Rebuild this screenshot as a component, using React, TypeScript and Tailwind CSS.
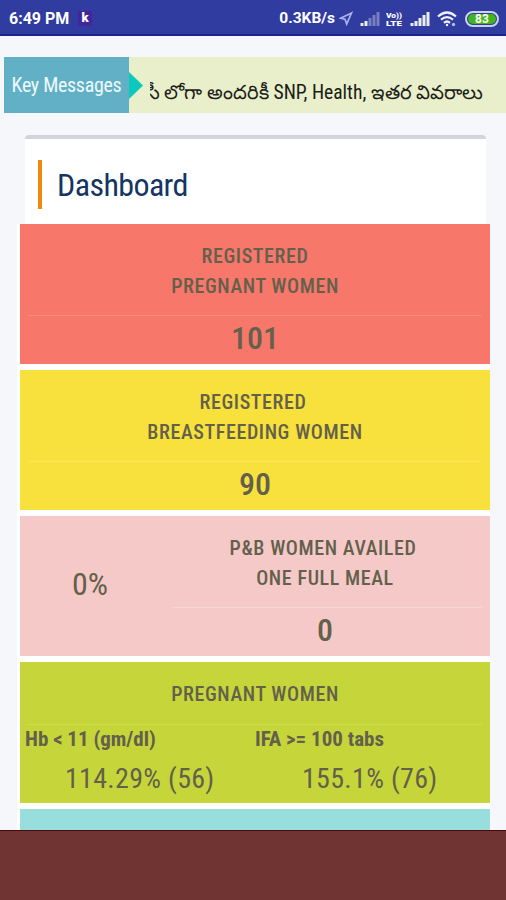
import type { ReactNode } from 'react';
import { clsx } from 'clsx';

function Signal({ level }: { level: number }) {
  return (
    <svg className="h-[15px] w-5" viewBox="0 0 20 15">
      {[3, 5, 8, 11, 14].map((h, i) => (
        <rect key={h} x={i * 4 + 0.5} y={15 - h} width="3" height={h} fill="#fff" opacity={i < level ? 0.9 : 0.35} />
      ))}
    </svg>
  );
}

function StatusBar() {
  return (
    <header className="flex h-9 items-center border-b-2 border-[#1c2292] bg-[#303c9f] pt-[3px] pl-[9px] font-[Roboto] text-white font-stretch-normal">
      <span className="w-[62px] text-base font-bold whitespace-nowrap">6:49 PM</span>
      <span className="ml-[7px] flex h-[15px] w-[14px] items-center justify-center bg-[#40279b] pb-0.5 text-[13px] font-black">k</span>
      <span className="ml-auto text-[15.5px] font-bold">0.3KB/s</span>
      <svg className="ml-1 h-[15px] w-[14px]" viewBox="0 0 15 15" fill="none" stroke="#a9b3ea" strokeWidth="1.8">
        <path d="M13.5 1.5 1.5 7.2l5 1.1 1.7 5.2z" />
      </svg>
      <div className="ml-[7px]"><Signal level={2} /></div>
      <svg className="ml-[6px] h-4 w-[17px]" viewBox="0 0 17 16" fill="#fff">
        <text x="0" y="6.5" fontSize="6.6" fontWeight="900" textLength="16" lengthAdjust="spacingAndGlyphs">Vo))</text>
        <text x="0" y="15" fontSize="7" fontWeight="900" textLength="16" lengthAdjust="spacingAndGlyphs">LTE</text>
      </svg>
      <div className="ml-[7px]"><Signal level={5} /></div>
      <svg className="ml-[7px] h-4 w-5" viewBox="0 0 20 16" fill="none" stroke="#eef1ff" strokeWidth="2.2">
        <path d="M1 5.5q9-8 18 0M4 8.7q6-5.2 12 0M7 11.8q3-2.6 6 0" />
        <circle cx="10" cy="14" r="1.2" fill="#eef1ff" stroke="none" />
        <circle cx="16.5" cy="13.5" r="1.7" fill="#aeb7ea" stroke="none" />
      </svg>
      <div className="mr-[7px] ml-[8px] flex h-4 w-[34px] rounded-full border-2 border-[#c9d3ee] p-px">
        <div className="flex flex-1 items-center justify-center rounded-full bg-[#43b51c] text-xs leading-none font-bold">83</div>
      </div>
    </header>
  );
}

function KeyMessages() {
  return (
    <div className="mt-[21px] ml-1 flex h-14 bg-[#e9eecb]">
      <div className="flex w-[125px] items-center justify-center bg-[#62b0c6] text-xl tracking-[-0.3px] text-[#eef9fc]">Key Messages</div>
      <svg className="mt-[15px] h-[27px] w-[14px]" viewBox="0 0 14 27">
        <path d="M0 0 14 13.5 0 27z" fill="#0dc8bd" />
      </svg>
      <p className="ml-[7px] flex-1 overflow-hidden pt-[21px] text-[19.6px] whitespace-nowrap text-[#1b1d18]">
        <span className="-ml-1">సీ లోగా అందరికీ SNP, Health, ఇతర వివరాలు</span>
      </p>
    </div>
  );
}

function Card({ color, children }: { color: string; children?: ReactNode }) {
  return <section className={clsx('h-[140.25px] shrink-0 text-[#63604b]', color)}>{children}</section>;
}

function Title({ children }: { children: ReactNode }) {
  return <h2 className="text-center text-xl leading-[30px] font-medium tracking-[0.6px]">{children}</h2>;
}

export default function App() {
  return (
    <div className="flex h-[900px] w-[506px] flex-col overflow-hidden bg-[#f5f7fa] font-['Roboto_Condensed',Roboto,sans-serif] font-stretch-condensed">
      <StatusBar />
      <KeyMessages />
      <main className="mt-[22px] flex min-h-0 flex-1 flex-col overflow-hidden">
        <div className="mr-5 ml-[25px] h-[88.5px] shrink-0 rounded-t border-t-4 border-[#d0d4db] bg-white pt-[21px] pl-[13px]">
          <h1 className="flex h-[49px] items-center border-l-4 border-[#ef8b0c] pl-[15px] text-[32px] tracking-[-0.6px] text-[#153563]">Dashboard</h1>
        </div>
        <div className="mr-4 ml-[17px] flex flex-col gap-[6px] bg-white pl-[3px]">
          <Card color="bg-[#f8776b]">
            <div className="pt-[17px]">
              <Title>REGISTERED<br />PREGNANT WOMEN</Title>
            </div>
            <hr className="mx-2 mt-[14px] border-[#f98a7b]" />
            <p className="text-center text-[32px] leading-[44px] font-medium">101</p>
          </Card>
          <Card color="bg-[#f8e13d]">
            <div className="pt-[17px]">
              <Title><span className="pr-1">REGISTERED</span><br />BREASTFEEDING WOMEN</Title>
            </div>
            <hr className="mx-2 mt-[14px] border-[#f9e65c]" />
            <p className="text-center text-[32px] leading-[44px] font-medium">90</p>
          </Card>
          <Card color="bg-[#f6c9c9]">
            <div className="flex h-full">
              <p className="w-[140px] pt-[46px] text-center text-[32px] leading-[44px]">0%</p>
              <div className="flex-1 pt-[17px]">
                <Title><span className="pr-1">P&amp;B WOMEN AVAILED</span><br />ONE FULL MEAL</Title>
                <hr className="mt-[14px] mr-2 ml-3 border-[#f8d5d5]" />
                <p className="text-center text-[32px] leading-[44px] font-medium">0</p>
              </div>
            </div>
          </Card>
          <Card color="bg-[#c6d63a]">
            <div className="pt-[17px]">
              <Title>PREGNANT WOMEN</Title>
            </div>
            <hr className="mx-2 mt-[15px] border-[#cfdc50]" />
            <div className="flex">
              <div className="w-[231px] pl-[5px]">
                <h3 className="text-[21px] leading-[28px] font-bold">Hb &lt; 11 (gm/dl)</h3>
                <p className="pl-[40px] text-[28px] leading-[52px] tracking-[0.3px]">114.29% (56)</p>
              </div>
              <div className="flex-1 pl-[4px]">
                <h3 className="text-[21px] leading-[28px] font-bold">IFA &gt;= 100 tabs</h3>
                <p className="pl-[47px] text-[28px] leading-[52px] tracking-[0.3px]">155.1% (76)</p>
              </div>
            </div>
          </Card>
          <Card color="bg-[#97dedd]" />
        </div>
      </main>
      <footer className="h-[70px] shrink-0 border-t border-[#48090e] bg-[#703432]" />
    </div>
  );
}
